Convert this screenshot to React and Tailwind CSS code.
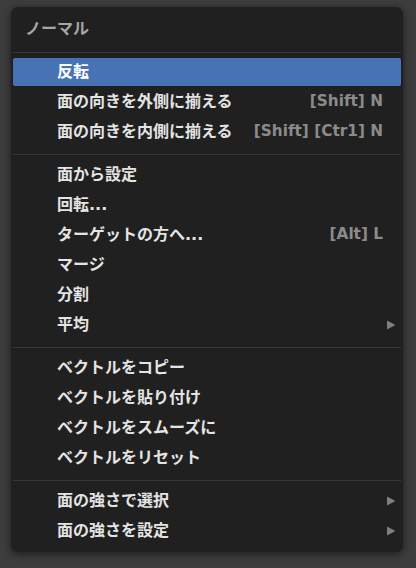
import React from "react";

const sections = [
  [
    { label: "反転", active: true },
    { label: "面の向きを外側に揃える", shortcut: "[Shift] N" },
    { label: "面の向きを内側に揃える", shortcut: "[Shift] [Ctr1] N" },
  ],
  [
    { label: "面から設定" },
    { label: "回転..." },
    { label: "ターゲットの方へ...", shortcut: "[Alt] L" },
    { label: "マージ" },
    { label: "分割" },
    { label: "平均", submenu: true },
  ],
  [
    { label: "ベクトルをコピー" },
    { label: "ベクトルを貼り付け" },
    { label: "ベクトルをスムーズに" },
    { label: "ベクトルをリセット" },
  ],
  [
    { label: "面の強さで選択", submenu: true },
    { label: "面の強さを設定", submenu: true },
  ],
];

const fontStack = {
  fontFamily: '"DejaVu Sans", "Noto Sans CJK JP", sans-serif',
};

const MenuItem = ({ item }) => {
  return (
    <div className="h-[30px] py-[1px] px-[2px]">
      <div
        className={`h-full flex items-center pl-[44px] pr-[18px] rounded-[2px] ${
          item.active ? "bg-[#4772b3] text-white" : "text-[#e4e4e4]"
        }`}
      >
        <span className="text-[16px] font-bold leading-none flex-1 whitespace-nowrap">
          {item.label}
        </span>
        {item.shortcut && (
          <span className="text-[15.3px] font-bold leading-none text-[#8b8b8b] whitespace-nowrap">
            {item.shortcut}
          </span>
        )}
        {item.submenu && (
          <svg width="10" height="10" viewBox="0 0 10 10" className="mr-[-13px]">
            <polygon points="1,0.5 9.5,5 1,9.5" fill="#7f7f7f" />
          </svg>
        )}
      </div>
    </div>
  );
};

const Separator = () => (
  <div className="pt-[7px] pb-[5px] px-[2px]">
    <div className="h-px bg-[#373737]" />
  </div>
);

export default function App() {
  return (
    <div className="w-[416px] h-[568px] bg-[#3d3d3d] pt-[7px] pl-[11px]" style={fontStack}>
      <div className="w-[392px] rounded-[7px] bg-[#202020] shadow-[0_2px_8px_rgba(0,0,0,0.55)] pb-[6px]">
        <div className="h-[45px] flex items-center pl-[14px] pb-[2px]">
          <span className="text-[16px] font-bold text-[#a6a6a6] leading-none">ノーマル</span>
        </div>
        <div className="px-[2px]">
          <div className="h-px bg-[#373737]" />
        </div>
        <div className="h-[4px]" />
        {sections.map((sec, i) => (
          <div key={i}>
            {i > 0 && <Separator />}
            {sec.map((item) => (
              <MenuItem key={item.label} item={item} />
            ))}
          </div>
        ))}
      </div>
    </div>
  );
}
